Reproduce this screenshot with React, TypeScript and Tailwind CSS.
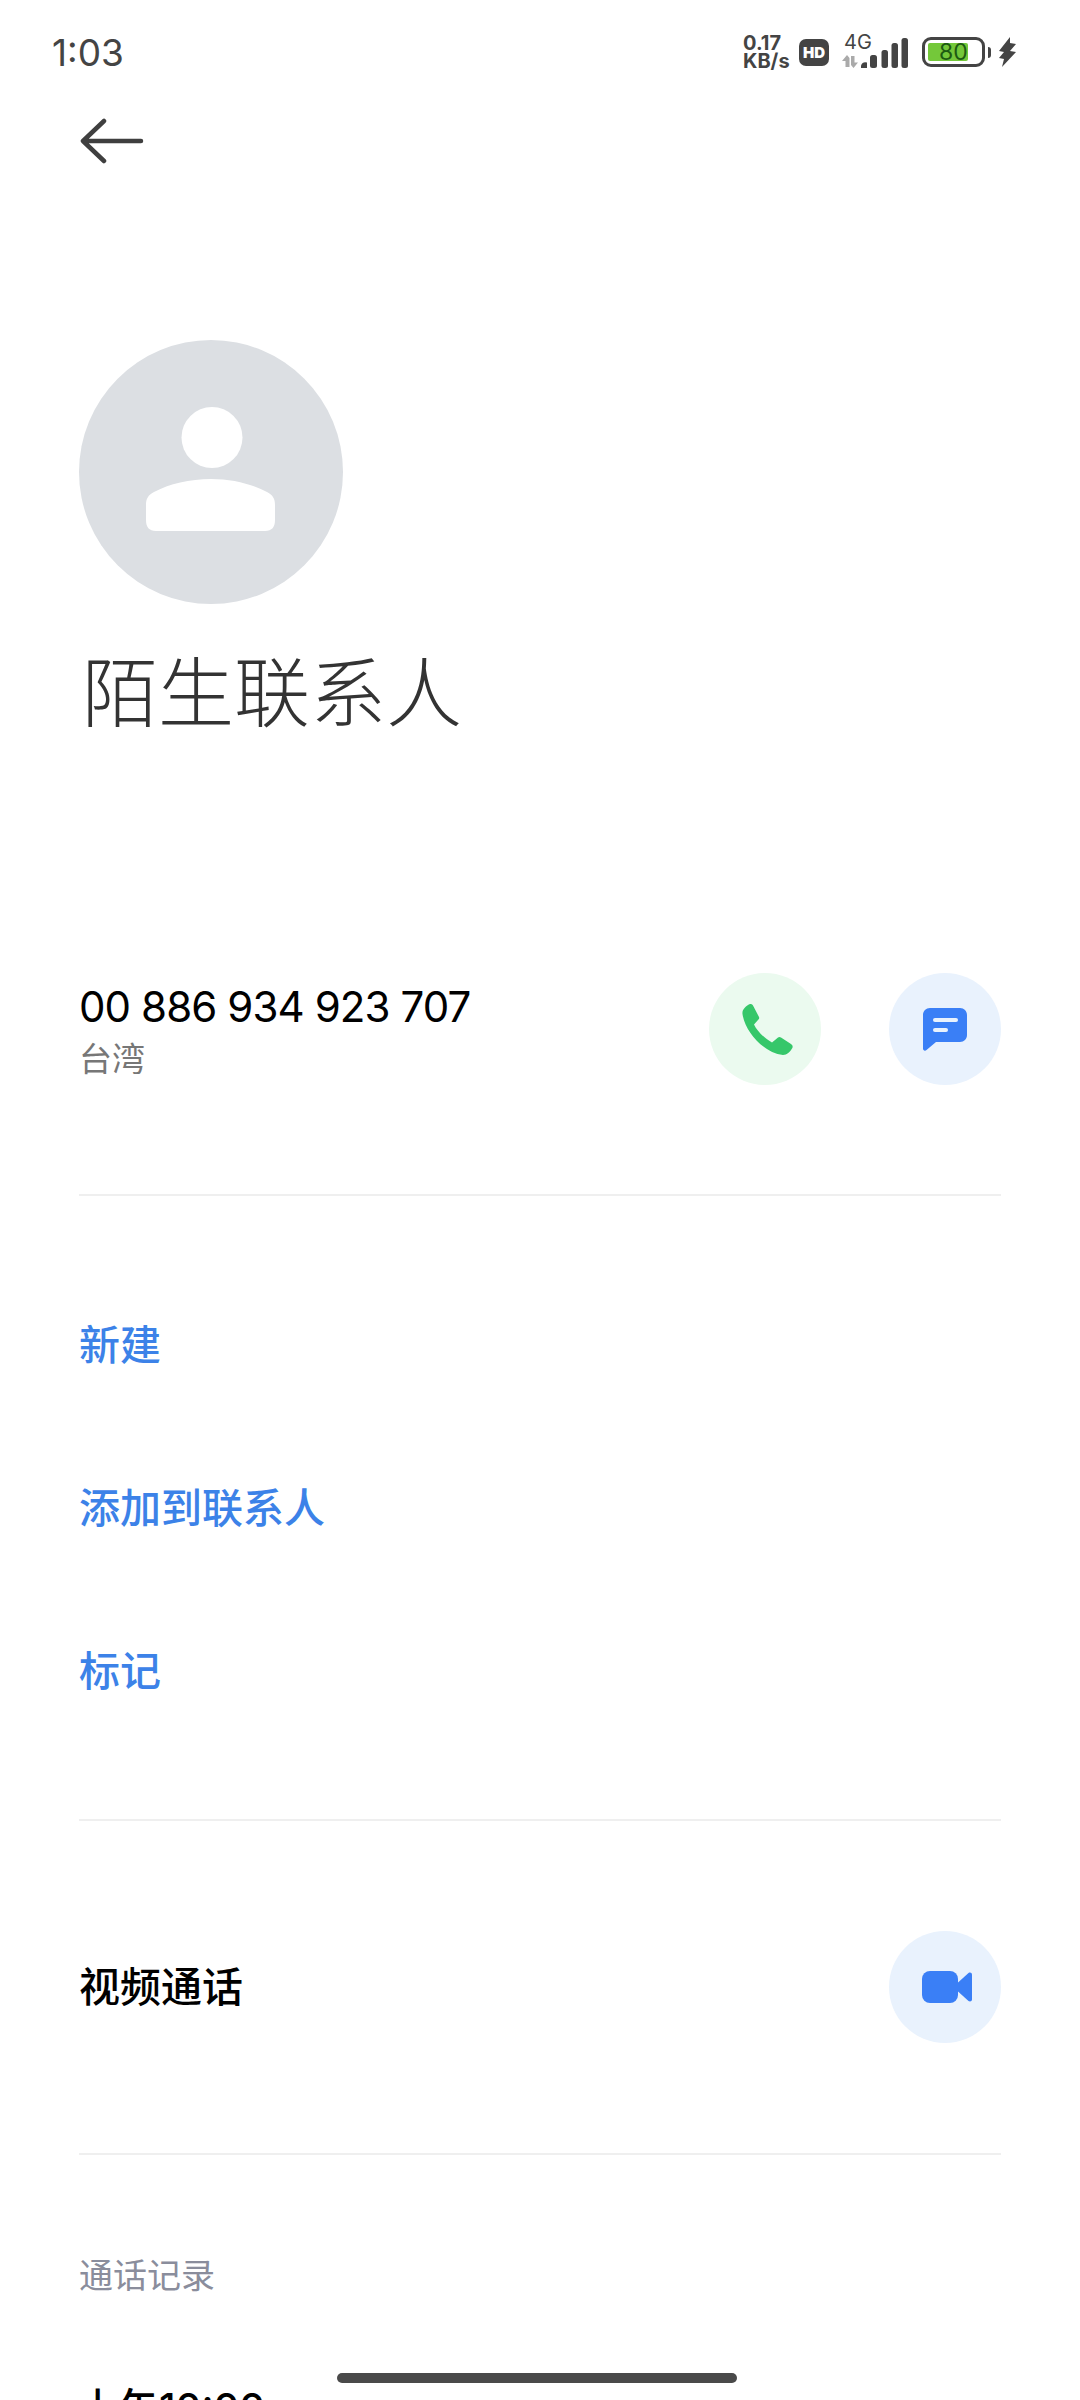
const CJK = "font-['Inter','Noto_Sans_CJK_SC',sans-serif]";

function Divider() {
  return <div className="mx-[79px] h-[2px] bg-[#efefef]" />;
}

function RoundButton({ tint, children }: { tint: string; children: React.ReactNode }) {
  return <div className={`flex h-[112px] w-[112px] items-center justify-center rounded-full ${tint}`}>{children}</div>;
}

function StatusBar() {
  return (
    <div className="flex h-[70px] items-center justify-between pr-[64px] pl-[52px] pt-[2px] text-[#444]">
      <span className="text-[37px] leading-none font-normal">1:03</span>
      <div className="flex items-center">
        <div className="flex w-[48px] flex-col text-[20px] leading-[18px] font-bold">
          <span>0.17</span>
          <span>KB/s</span>
        </div>
        <div className="ml-[8px] flex h-[27px] w-[30px] items-center justify-center rounded-[7px] bg-[#444] text-[15px] leading-none font-black text-white">
          HD
        </div>
        {/* 4G + signal */}
        <div className="relative ml-[13px] h-[34px] w-[66px]">
          <span className="absolute top-[-3px] left-[2px] text-[20px] leading-[20px]">4G</span>
          <svg className="absolute top-0 left-0" width="66" height="34" viewBox="0 0 66 34">
            <path d="M3.500 32V26H0L5 20l2.500 3V32z" fill="#aaa" />
            <path d="M9 21V30l2.500 3L16 27.500H12.500V21z" fill="#aaa" />
            <path d="M19 30.500a5 5 0 0 1 6-3V33h-6z" fill="#444" />
            <rect x="28" y="20" width="7" height="13" rx="2.500" fill="#444" />
            <rect x="39.500" y="15" width="6.500" height="18" rx="2.500" fill="#444" />
            <rect x="49.500" y="8" width="6.500" height="25" rx="2.500" fill="#444" />
            <rect x="59.500" y="3" width="6.500" height="30" rx="2.500" fill="#444" />
          </svg>
        </div>
        {/* battery */}
        <div className="relative ml-[14px] flex h-[30px] w-[63px] rounded-[9px] border-[3px] border-[#444] p-[3px]">
          <div className="h-full w-[40px] rounded-[2px] bg-[#74c83a]" />
          <span className="absolute top-0 left-[14px] text-[23px] leading-[24px] text-[#1d5a12]">80</span>
        </div>
        <div className="ml-[3px] h-[11px] w-[3px] rounded-r-[3px] bg-[#444]" />
        <svg className="ml-[8px]" width="17" height="30" viewBox="0 0 17 30">
          <path d="M11 0L0 14l5 1-5 6 5 1-2 8 14-15-6-1 6-7-6-1z" fill="#444" />
        </svg>
      </div>
    </div>
  );
}

function ActionLink({ label }: { label: string }) {
  return <div className="flex h-[163px] items-center text-[41px] leading-none font-medium text-[#3c82e8]">{label}</div>;
}

export default function App() {
  return (
    <div className={`relative h-[2400px] w-[1080px] overflow-hidden bg-white ${CJK}`}>
      <div className="h-[16px]" />
      <StatusBar />
      <div className="h-[32px]" />

      {/* back */}
      <div className="pl-[80px]">
        <svg width="64" height="46" viewBox="0 0 64 46" fill="none" stroke="#3f3f3f" strokeWidth="4.500" strokeLinecap="round" strokeLinejoin="round">
          <path d="M3 23h58M24 3L3 23l21 20" />
        </svg>
      </div>

      {/* avatar + name */}
      <div className="mt-[176px] pl-[79px]">
        <div className="flex h-[264px] w-[264px] items-center justify-center rounded-full bg-[#dcdfe3]">
          <svg className="mb-[6px]" width="132" height="124" viewBox="0 0 132 124" fill="#fff">
            <circle cx="67" cy="30.500" r="30.500" />
            <path d="M1 98C1 92 3 88 9 85 24 77 45 72 66 72S107 77 122 85C128 88 130 92 130 98V113C130 120 127 124 120 124H11C4 124 1 120 1 113Z" />
          </svg>
        </div>
        <h1 className="mt-[49px] ml-[3px] text-[76px] leading-[80px] font-light text-[#333]">陌生联系人</h1>
      </div>

      {/* number */}
      <div className="mt-[240px] flex items-center justify-between pr-[79px] pl-[79px]">
        <div>
          <div className="text-[42px] leading-[52px] tracking-[-0.9px] text-black">00 886 934 923 707</div>
          <div className="mt-[7px] text-[33px] leading-[38px] text-[#777]">台湾</div>
        </div>
        <div className="flex gap-[68px]">
          <RoundButton tint="bg-[#ebfaef]">
            <svg className="ml-[4px]" width="51" height="51" viewBox="0 0 51 51" fill="#36c76a">
              <path d="M6 1C8-.5 10 0 11 1.500L17 13C17.500 14.500 17 15 16 16L12 20.500C15 27 22 34 30 38.500L36 33.500C37 32.700 38 32.800 39 33.500L49 40C51 41.500 51 43 50 44.500 48 48 45 51 41 51 22 49 3 28 .5 10 0 6 3 3 6 1Z" />
            </svg>
          </RoundButton>
          <RoundButton tint="bg-[#e9f2fd]">
            <svg width="44" height="43" viewBox="0 0 44 43">
              <path d="M7 0h30c4 0 7 3 7 7v20c0 4-3 7-7 7H13L3.500 42C2 43.500 0 42.500 0 40.500V7c0-4 3-7 7-7z" fill="#3a7ff6" />
              <rect x="10" y="10" width="25" height="4" rx="2" fill="#e9f2fd" />
              <rect x="10" y="20" width="15" height="4" rx="2" fill="#e9f2fd" />
            </svg>
          </RoundButton>
        </div>
      </div>

      <div className="h-[109px]" />
      <Divider />

      {/* actions */}
      <div className="pt-[68px] pb-[66px] pl-[79px]">
        <ActionLink label="新建" />
        <ActionLink label="添加到联系人" />
        <ActionLink label="标记" />
      </div>
      <Divider />

      {/* video */}
      <div className="flex h-[332px] items-center justify-between pr-[79px] pl-[79px]">
        <span className="text-[41px] leading-none font-medium text-black">视频通话</span>
        <RoundButton tint="bg-[#e9f2fd]">
          <svg className="ml-[4px]" width="50" height="32" viewBox="0 0 50 32" fill="#3a7ff6">
            <rect x="0" y="0" width="36" height="32" rx="8" />
            <path d="M36 11.500l10.500-9.500c1.500-1 3.500-.3 3.500 1.500v25c0 1.800-2 2.500-3.500 1.500L36 20.500z" />
          </svg>
        </RoundButton>
      </div>
      <Divider />

      {/* call log */}
      <div className="pl-[79px]">
        <div className="mt-[101px] text-[34px] leading-[40px] text-[#8a8d9c]">通话记录</div>
        <div className="mt-[88px] text-[40px] leading-[48px] font-medium text-black">上午10:00</div>
      </div>

      <div className="absolute bottom-[17px] left-[337px] h-[10px] w-[400px] rounded-full bg-[#4a4a4a]" />
    </div>
  );
}
